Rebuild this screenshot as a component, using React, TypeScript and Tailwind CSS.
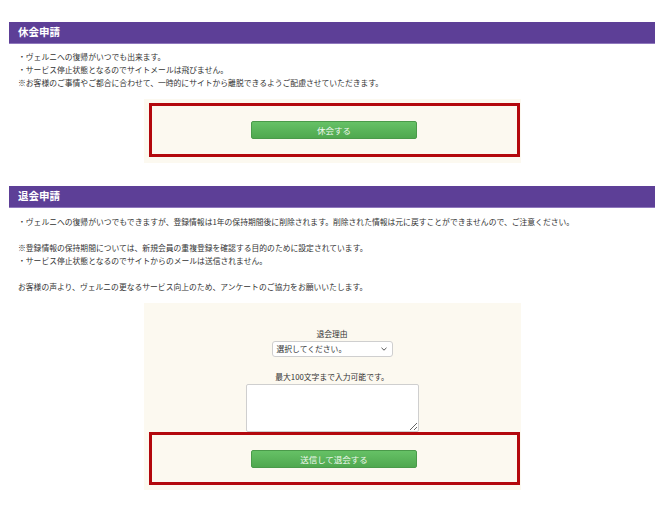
const font = { fontFamily: '"Noto Sans CJK JP", "Noto Sans", sans-serif' }

function SectionHead({ title }: { title: string }) {
  return (
    <div className="h-[22px] bg-[#5d3f97] border-b border-[#8f78bd] pl-[9px] flex items-center">
      <h2 className="text-[10.5px] font-bold text-white leading-none">{title}</h2>
    </div>
  )
}

function GreenButton({ label }: { label: string }) {
  return (
    <button
      type="button"
      className="w-[166px] h-[18px] rounded-[2px] border border-[#4a9a4a] bg-gradient-to-b from-[#66c166] to-[#4fa84f] text-[8.5px] text-[#eef8ee] leading-none"
    >
      {label}
    </button>
  )
}

export default function App() {
  return (
    <div className="w-[670px] h-[531px] bg-white text-[#333] overflow-hidden" style={font}>
      <div className="pt-[22px] pl-[9px] w-[655px]">
        {/* 休会 */}
        <SectionHead title="休会申請" />
        <div className="pl-[9px] pt-[6px] text-[7.8px] leading-[13px]">
          <p>・ヴェルニへの復帰がいつでも出来ます。</p>
          <p>・サービス停止状態となるのでサイトメールは飛びません。</p>
          <p>※お客様のご事情やご都合に合わせて、一時的にサイトから離脱できるようご配慮させていただきます。</p>
        </div>
        <div className="mt-[10px] mx-auto w-[377px] bg-[#fcf9f0] pt-[4px] pb-[6px]">
          <div className="ml-[5px] mr-[1px] h-[54px] border-[3px] border-[#b3080d] flex items-center justify-center">
            <GreenButton label="休会する" />
          </div>
        </div>

        {/* 退会 */}
        <div className="mt-[23px]">
          <SectionHead title="退会申請" />
        </div>
        <div className="pl-[9px] pt-[7px] text-[7.8px] leading-[13px]">
          <p>・ヴェルニへの復帰がいつでもできますが、登録情報は1年の保持期間後に削除されます。削除された情報は元に戻すことができませんので、ご注意ください。</p>
          <p>&nbsp;</p>
          <p>※登録情報の保持期間については、新規会員の重複登録を確認する目的のために設定されています。</p>
          <p>・サービス停止状態となるのでサイトからのメールは送信されません。</p>
          <p>&nbsp;</p>
          <p>お客様の声より、ヴェルニの更なるサービス向上のため、アンケートのご協力をお願いいたします。</p>
        </div>
        <div className="mt-[10px] mx-auto w-[377px] bg-[#fcf9f0] pt-[25px] pb-[5px] flex flex-col items-center">
          <p className="text-[7.8px] leading-[12px]">退会理由</p>
          <div className="mt-[1px] w-[121px] h-[16px] bg-white border border-[#cfcfcf] rounded-[3px] flex items-center justify-between pl-[4px] pr-[5px]">
            <span className="text-[7.8px] leading-none">選択してください。</span>
            <svg width="6" height="4" viewBox="0 0 6 4" fill="none" stroke="#555" strokeWidth="1">
              <path d="M0.5 0.8 L3 3.2 L5.5 0.8" />
            </svg>
          </div>
          <p className="mt-[14px] text-[7.8px] leading-[12px]">最大100文字まで入力可能です。</p>
          <textarea className="mt-[1px] w-[173px] h-[48px] bg-white border border-[#cfcfcf] rounded-[2px] block" />
          <div className="self-stretch ml-[5px] mr-[1px] h-[53px] border-[3px] border-[#b3080d] flex items-center justify-center pt-[1px]">
            <GreenButton label="送信して退会する" />
          </div>
        </div>
      </div>
    </div>
  )
}
